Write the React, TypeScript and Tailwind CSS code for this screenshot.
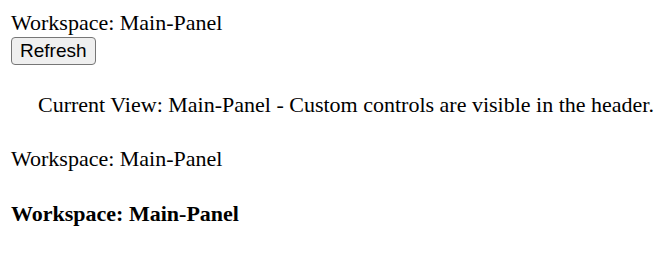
export default function App() {
  return (
    <div className="mx-[11px] mt-[10px] font-['Liberation_Serif','Times_New_Roman',serif] text-[22px] leading-[normal] text-black">
      <div>Workspace: Main-Panel</div>
      <button className="block mt-[1px] font-['Liberation_Sans',Arial,sans-serif] text-[19px] leading-[normal] px-[8px] py-[2px] bg-[#efefef] border-[1.4px] border-[#767676] rounded-[4px]">
        Refresh
      </button>
      <p className="mt-[27px] pl-[27px]">
        Current View: Main-Panel - Custom controls are visible in the header.
      </p>
      <p className="mt-[28px]">Workspace: Main-Panel</p>
      <h4 className="mt-[29px] font-bold">Workspace: Main-Panel</h4>
    </div>
  )
}
